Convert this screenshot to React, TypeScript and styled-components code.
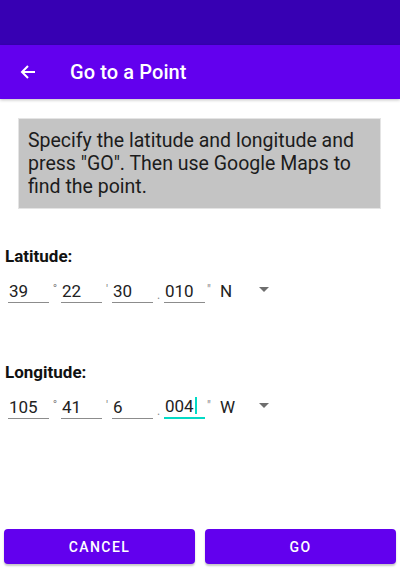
import React from 'react';
import styled, { createGlobalStyle } from 'styled-components';

const GlobalStyle = createGlobalStyle`
  html, body {
    margin: 0;
    padding: 0;
    background: #ffffff;
    font-family: Roboto, "Noto Sans", sans-serif;
  }
`;

const Screen = styled.div`
  width: 400px;
  height: 582px;
  display: flex;
  flex-direction: column;
  background: #ffffff;
  overflow: hidden;
`;

const StatusBar = styled.div`
  height: 45px;
  background-color: #3700b3;
`;

const AppBar = styled.header`
  height: 54px;
  background-color: #6200ee;
  display: flex;
  align-items: center;
  padding-left: 19px;
  box-shadow: 0 1px 3px rgba(0, 0, 0, 0.25);
  position: relative;
  z-index: 1;
`;

const BackButton = styled.div`
  width: 18px;
  height: 18px;
  display: flex;
  align-items: center;
  justify-content: center;
`;

const Title = styled.h1`
  margin: 0 0 0 33px;
  color: #ffffff;
  font-size: 20px;
  font-weight: 500;
  letter-spacing: 0.1px;
`;

const Content = styled.main`
  flex: 1;
  display: flex;
  flex-direction: column;
  padding: 19px 4px 18px 4px;
`;

const InfoBox = styled.div`
  margin: 0 15px 0 14px;
  height: 91px;
  box-sizing: border-box;
  background-color: #c4c4c4;
  border: 1px solid #e4e4e4;
  padding: 10px 10px 8px 9px;
  color: #1c1c1c;
  font-size: 19.5px;
  line-height: 23px;
`;

const Label = styled.div<{ $top: number }>`
  margin: ${(p) => p.$top}px 0 0 1px;
  font-size: 17px;
  font-weight: 700;
  color: #111111;
  line-height: 20px;
`;

const CoordRow = styled.div`
  display: flex;
  align-items: flex-start;
  margin-top: 7px;
  height: 30px;
  padding-left: 4px;
`;

const Field = styled.div<{ $focused?: boolean }>`
  width: 41px;
  height: 30px;
  box-sizing: border-box;
  display: flex;
  align-items: flex-end;
  padding: 0 1px 1px;
  font-size: 17px;
  line-height: 20px;
  color: #222222;
  border-bottom: ${(p) => (p.$focused ? '2px solid #03dac5' : '1px solid #8c8c8c')};
`;

const Caret = styled.span`
  display: inline-block;
  width: 2px;
  height: 17px;
  margin: 0 0 2px 1px;
  background-color: #03dac5;
`;

const Sep = styled.div<{ $w: number; $top: number }>`
  width: ${(p) => p.$w}px;
  text-align: center;
  font-size: 12px;
  line-height: 14px;
  color: #8a8a8a;
  padding-top: ${(p) => p.$top}px;
`;

const Hemisphere = styled.div`
  width: 50px;
  height: 30px;
  box-sizing: border-box;
  display: flex;
  align-items: flex-end;
  justify-content: space-between;
  padding-bottom: 2px;
  margin-left: 7px;
  font-size: 17px;
  line-height: 20px;
  color: #222222;
`;

const DropArrow = styled.span`
  width: 0;
  height: 0;
  border-left: 5px solid transparent;
  border-right: 5px solid transparent;
  border-top: 5px solid #6e6e6e;
  margin: 0 1px 9px 0;
`;

const ButtonBar = styled.div`
  margin-top: auto;
  display: grid;
  grid-template-columns: 1fr 1fr;
  gap: 10px;
`;

const ActionButton = styled.button`
  height: 35px;
  border: none;
  border-radius: 4px;
  background-color: #6200ee;
  color: #ffffff;
  font-family: Roboto, "Noto Sans", sans-serif;
  font-size: 14px;
  font-weight: 500;
  letter-spacing: 1.4px;
  text-transform: uppercase;
  box-shadow: 0 2px 2px rgba(0, 0, 0, 0.22);
  cursor: pointer;
`;

type Coord = {
  label: string;
  top: number;
  deg: string;
  min: string;
  sec: string;
  frac: string;
  hemi: string;
  focusFrac?: boolean;
};

const coords: Coord[] = [
  { label: 'Latitude:', top: 37, deg: '39', min: '22', sec: '30', frac: '010', hemi: 'N' },
  { label: 'Longitude:', top: 59, deg: '105', min: '41', sec: '6', frac: '004', hemi: 'W', focusFrac: true },
];

const BackArrow = () => (
  <svg width="16" height="16" viewBox="0 0 16 16" fill="none">
    <path d="M15 8H2M8 2L2 8l6 6" stroke="#ffffff" strokeWidth="2" />
  </svg>
);

const CoordInput = ({ c }: { c: Coord }) => (
  <>
    <Label $top={c.top}>{c.label}</Label>
    <CoordRow>
      <Field>{c.deg}</Field>
      <Sep $w={12} $top={9}>°</Sep>
      <Field>{c.min}</Field>
      <Sep $w={10} $top={10}>'</Sep>
      <Field>{c.sec}</Field>
      <Sep $w={11} $top={15}>.</Sep>
      <Field $focused={c.focusFrac}>
        {c.frac}
        {c.focusFrac && <Caret />}
      </Field>
      <Sep $w={8} $top={10}>"</Sep>
      <Hemisphere>
        {c.hemi}
        <DropArrow />
      </Hemisphere>
    </CoordRow>
  </>
);

const App = () => {
  return (
    <>
      <GlobalStyle />
      <Screen>
        <StatusBar />
        <AppBar>
          <BackButton>
            <BackArrow />
          </BackButton>
          <Title>Go to a Point</Title>
        </AppBar>
        <Content>
          <InfoBox>
            Specify the latitude and longitude and press "GO". Then use Google Maps to find the point.
          </InfoBox>
          {coords.map((c) => (
            <CoordInput key={c.label} c={c} />
          ))}
          <ButtonBar>
            <ActionButton>Cancel</ActionButton>
            <ActionButton>Go</ActionButton>
          </ButtonBar>
        </Content>
      </Screen>
    </>
  );
};

export default App;
